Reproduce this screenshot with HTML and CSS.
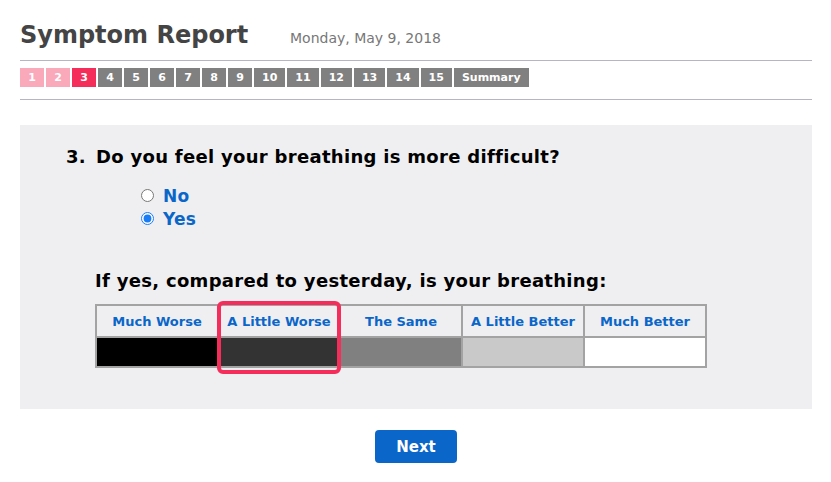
FILE: index.html
```html
<!DOCTYPE html>
<html>

<head>
    <title>Symptom Report</title>
    <link rel="stylesheet" href="styles.css">
</head>

<body>
    <div class="page">
        <div class="header">
            <h1 class="title">Symptom Report</h1>
            <span class="date">Monday, May 9, 2018</span>
        </div>

        <div class="steps">
            <span class="step done">1</span>
            <span class="step done">2</span>
            <span class="step current">3</span>
            <span class="step">4</span>
            <span class="step">5</span>
            <span class="step">6</span>
            <span class="step">7</span>
            <span class="step">8</span>
            <span class="step">9</span>
            <span class="step">10</span>
            <span class="step">11</span>
            <span class="step">12</span>
            <span class="step">13</span>
            <span class="step">14</span>
            <span class="step">15</span>
            <span class="step">Summary</span>
        </div>

        <div class="question-box">
            <div class="question">
                <span class="question-number">3.</span>
                <span>Do you feel your breathing is more difficult?</span>
            </div>

            <div class="answers">
                <label class="answer"><input type="radio" name="difficult"> No</label>
                <label class="answer"><input type="radio" name="difficult" checked> Yes</label>
            </div>

            <div class="follow-up">
                <div class="follow-up-title">If yes, compared to yesterday, is your breathing:</div>

                <div class="scale">
                    <div class="scale-option">
                        <div class="scale-label">Much Worse</div>
                        <div class="swatch swatch-1"></div>
                    </div>
                    <div class="scale-option selected">
                        <div class="scale-label">A Little Worse</div>
                        <div class="swatch swatch-2"></div>
                    </div>
                    <div class="scale-option">
                        <div class="scale-label">The Same</div>
                        <div class="swatch swatch-3"></div>
                    </div>
                    <div class="scale-option">
                        <div class="scale-label">A Little Better</div>
                        <div class="swatch swatch-4"></div>
                    </div>
                    <div class="scale-option">
                        <div class="scale-label">Much Better</div>
                        <div class="swatch swatch-5"></div>
                    </div>
                </div>
            </div>
        </div>

        <div class="actions">
            <button class="next-button">Next</button>
        </div>
    </div>
</body>

</html>
```

FILE: styles.css
```css
body {
    margin: 0;
    background-color: #fff;
    font-family: "DejaVu Sans", Verdana, sans-serif;
}

.page {
    width: 792px;
    margin: 0 20px;
}

.header {
    display: flex;
    align-items: baseline;
    padding-top: 20px;
    padding-bottom: 9px;
    border-bottom: 1px solid #b7b4c5;
}

.title {
    margin: 0;
    font-size: 24px;
    line-height: 31px;
    color: #444;
    width: 270px;
}

.date {
    font-size: 14px;
    color: #777;
}

.steps {
    display: flex;
    gap: 2px;
    padding: 7px 0 12px;
    border-bottom: 1px solid #b7b4c5;
}

.step {
    height: 19px;
    line-height: 19px;
    padding: 0 8px;
    min-width: 8px;
    text-align: center;
    background-color: #808080;
    color: #fff;
    font-size: 11px;
    font-weight: bold;
}

.step.done {
    background-color: #f9a9ba;
}

.step.current {
    background-color: #f52d5a;
}

.question-box {
    margin-top: 25px;
    background-color: #efeff1;
    padding: 21px 0 41px 46px;
}

.question {
    display: flex;
    font-size: 18px;
    font-weight: bold;
    line-height: 22px;
    letter-spacing: 0.3px;
    color: #000;
}

.question-number {
    width: 30px;
}

.answers {
    display: flex;
    flex-direction: column;
    margin: 16px 0 0 75px;
}

.answer {
    display: flex;
    align-items: center;
    gap: 5px;
    height: 23px;
    font-size: 17px;
    font-weight: bold;
    letter-spacing: 0.2px;
    color: #0a66c8;
}

.answer input {
    margin: 0 4px 0 0;
    accent-color: #1a7cf5;
}

.follow-up {
    margin: 40px 0 0 29px;
}

.follow-up-title {
    font-size: 18px;
    font-weight: bold;
    line-height: 22px;
    letter-spacing: 0.3px;
    color: #000;
    margin-bottom: 12px;
}

.scale {
    display: grid;
    grid-template-columns: repeat(5, 120px);
    gap: 2px;
    padding: 2px;
    width: fit-content;
    background-color: #a3a3a3;
}

.scale-option {
    position: relative;
    display: flex;
    flex-direction: column;
    gap: 2px;
}

.scale-option.selected::after {
    content: "";
    position: absolute;
    top: -5px;
    left: -2px;
    right: -2px;
    bottom: -8px;
    border: 4px solid #f52d5a;
    border-radius: 6px;
}

.scale-label {
    display: flex;
    align-items: center;
    justify-content: center;
    height: 30px;
    background-color: #efeff2;
    color: #0a66c8;
    font-size: 13px;
    font-weight: bold;
}

.swatch {
    height: 28px;
}

.swatch-1 {
    background-color: #000;
}

.swatch-2 {
    background-color: #333;
}

.swatch-3 {
    background-color: #808080;
}

.swatch-4 {
    background-color: #c9c9c9;
}

.swatch-5 {
    background-color: #fff;
}

.actions {
    display: flex;
    justify-content: center;
    padding-top: 21px;
}

.next-button {
    width: 82px;
    height: 33px;
    border: none;
    border-radius: 4px;
    background-color: #0a66c8;
    color: #fff;
    font-family: "DejaVu Sans", Verdana, sans-serif;
    font-size: 15px;
    font-weight: bold;
    cursor: pointer;
}
```
